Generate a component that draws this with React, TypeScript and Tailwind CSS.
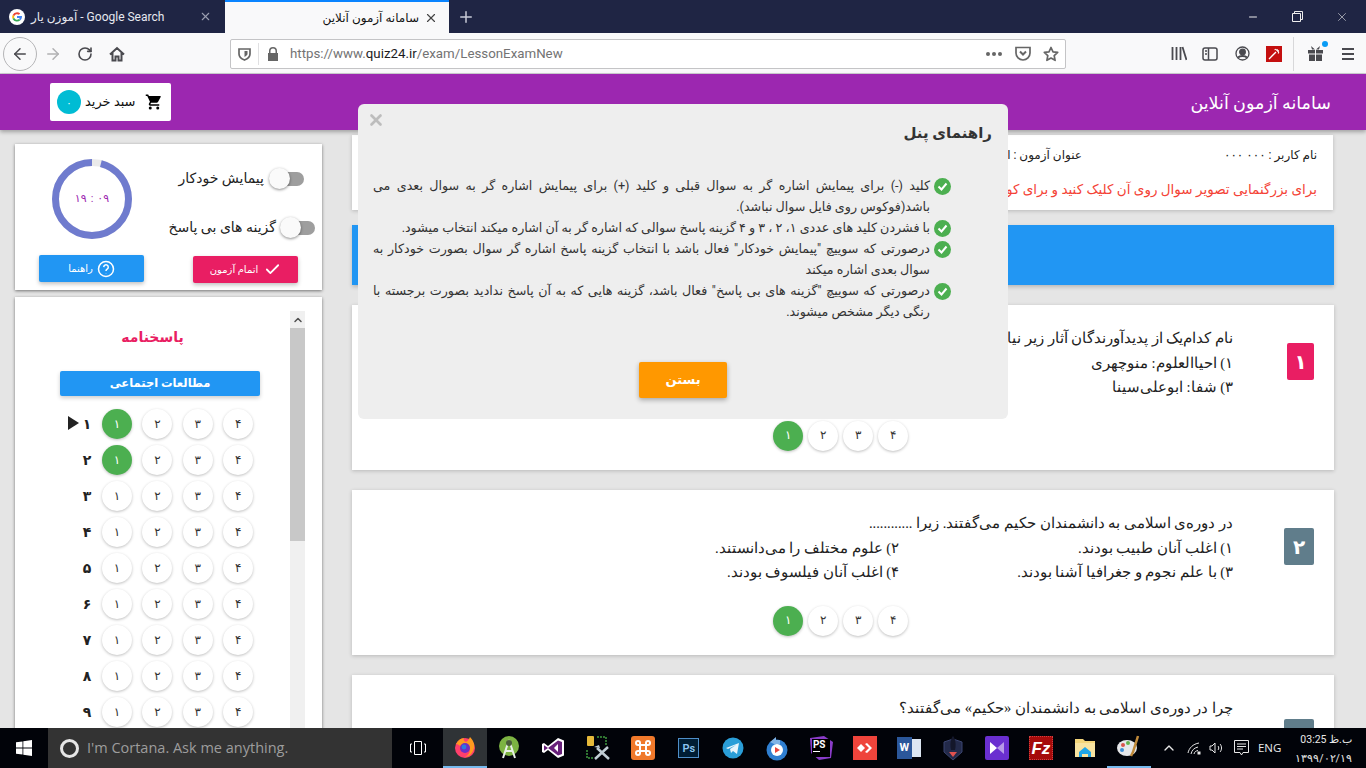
import React from "react";
import { ArrowLeft, ArrowRight, Check, ChevronUp, Minus, Plus, RotateCw, X } from "lucide-react";

const digits = ["۱", "۲", "۳", "۴"];
const rows = ["۱", "۲", "۳", "۴", "۵", "۶", "۷", "۸", "۹"];

const helpItems = [
  "کلید (-) برای پیمایش اشاره گر به سوال قبلی و کلید (+) برای پیمایش اشاره گر به سوال بعدی می باشد(فوکوس روی فایل سوال نباشد).",
  "با فشردن کلید های عددی ۱، ۲ ، ۳ و ۴ گزینه پاسخ سوالی که اشاره گر به آن اشاره میکند انتخاب میشود.",
  "درصورتی که سوییچ \"پیمایش خودکار\" فعال باشد با انتخاب گزینه پاسخ اشاره گر سوال بصورت خودکار به سوال بعدی اشاره میکند",
  "درصورتی که سوییچ \"گزینه های بی پاسخ\" فعال باشد، گزینه هایی که به آن پاسخ ندادید بصورت برجسته با رنگی دیگر مشخص میشوند.",
];

const Toggle = () => (
  <div className="relative h-[14px] w-[34px] rounded-full bg-[#9e9e9e]">
    <div className="absolute left-[-1px] top-[-4px] h-[21px] w-[21px] rounded-full bg-[#fafafa] shadow-[0_1px_3px_rgba(0,0,0,0.45)]" />
  </div>
);

const ChoiceCircle = ({ label, active }: { label: string; active?: boolean }) => (
  <div
    className={`flex h-[30px] w-[30px] items-center justify-center rounded-full text-[12px] shadow-[0_1px_3px_rgba(0,0,0,0.25)] ${
      active ? "bg-[#4caf50] text-white" : "bg-white text-[#333]"
    }`}
  >
    {label}
  </div>
);

const QuestionCard = ({
  num,
  badge,
  badgeWidth,
  badgeTop,
  title,
  options,
}: {
  num: string;
  badge: string;
  badgeWidth: string;
  badgeTop: string;
  title: string;
  options: string[][];
}) => (
  <div className="mt-[20px] flex h-[165px] w-[982px] shrink-0 justify-end bg-white pr-[20px] shadow-[0_1px_4px_rgba(0,0,0,0.2)]">
    <div dir="rtl" className="w-[863px] pt-[21px] font-['Liberation_Serif','DejaVu_Serif',serif] text-[14.5px] leading-[24.5px] text-[#222]">
      <div>{title}</div>
      {options.map((row, i) => (
        <div key={i} className="grid grid-cols-[334px_334px]">
          {row.map((o) => (
            <div key={o}>{o}</div>
          ))}
        </div>
      ))}
      {options.length > 0 && (
        <div className="mr-[325px] mt-[21px] flex justify-end gap-[5px]" dir="ltr">
          {digits.map((d) => (
            <ChoiceCircle key={d} label={d} active={d === "۱"} />
          ))}
        </div>
      )}
    </div>
    <div className={`ml-[51px] flex w-[30px] justify-end ${badgeTop}`}>
      <div className={`flex h-[37px] items-center justify-center rounded-[2px] text-[20px] font-bold text-white ${badgeWidth} ${badge}`}>
        {num}
      </div>
    </div>
  </div>
);

const Firefox = () => (
  <svg width="24" height="24" viewBox="0 0 24 24">
    <circle cx="12" cy="13" r="10" fill="#ff3f6c" />
    <path d="M3 9c2-4 5-6 8-6-1 2 0 3 2 4 2-1 3-3 4-5 3 3 5 7 4 11-1 5-5 9-9 9 5-2 6-8 3-11-2-2-6-2-8 0-1-1-2-2-4-2z" fill="#ff9a1f" />
    <circle cx="12" cy="13" r="5" fill="#6e2fc4" />
    <circle cx="11" cy="12" r="2.4" fill="#2a7ae2" />
  </svg>
);

const taskIcons: React.ReactNode[] = [
  <svg key="android" width="24" height="26" viewBox="0 0 24 26">
    <circle cx="12" cy="11" r="10" fill="#7cb342" />
    <path d="M12 5l-6 18M12 5l6 18M8 16h8" stroke="#e8f0e8" strokeWidth="2" fill="none" />
    <circle cx="12" cy="8" r="3" fill="#4a5d3a" />
  </svg>,
  <svg key="vs" width="24" height="24" viewBox="0 0 24 24">
    <path d="M17 2l6 2.5v15L17 22 7 14l-4 3-2-1V8l2-1 4 3z" fill="#fff" />
    <path d="M17 4.500l4 1.500v12l-4 1.500L7 12l-4 2.800V9.200L7 12z" fill="#68217a" />
    <path d="M17 8l-4 4 4 4z" fill="#fff" />
  </svg>,
  <svg key="tools" width="26" height="26" viewBox="0 0 26 26">
    <rect x="2" y="1" width="7" height="10" rx="1" fill="#e6b93a" />
    <path d="M12 2h9v9M2 15v8h7" stroke="#3f9b3f" strokeWidth="1.5" strokeDasharray="2 1" fill="none" />
    <path d="M10 24l13-12M12 13l12 11" stroke="#c0ccd4" strokeWidth="2.5" />
    <path d="M9 12l5-2 1 3z" fill="#c0ccd4" />
  </svg>,
  <div key="xampp" className="flex h-[24px] w-[24px] items-center justify-center rounded-[3px] bg-[#f0792b]">
    <svg width="18" height="18" viewBox="0 0 18 18" fill="none" stroke="#fff" strokeWidth="2">
      <path d="M6 6H4a2 2 0 1 1 2-2v10a2 2 0 1 1-2-2h10a2 2 0 1 1-2 2V4a2 2 0 1 1 2 2z" />
    </svg>
  </div>,
  <div key="ps" className="flex h-[20px] w-[21px] items-center justify-center border border-[#4f8fc9] bg-[#001d34] text-[11px] font-semibold leading-none text-[#8cc4ef]">
    Ps
  </div>,
  <svg key="telegram" width="22" height="22" viewBox="0 0 22 22">
    <circle cx="11" cy="11" r="10.5" fill="#2a9ed8" />
    <path d="M4 11l13-5-2 11-4-3-2 2-1-4 6-4-8 4z" fill="#e8f4fb" />
  </svg>,
  <svg key="cast" width="24" height="26" viewBox="0 0 24 26">
    <circle cx="12" cy="15" r="10.5" fill="#2f7fd1" />
    <path d="M5 7l6-5v3h4v4H9z" fill="#7fb3e6" />
    <circle cx="12" cy="15" r="6" fill="#fff" />
    <path d="M10 12l5 3-5 3z" fill="#e8473f" />
  </svg>,
  <div key="phpstorm" className="relative h-[22px] w-[22px]">
    <svg className="absolute -left-[2px] -top-[2px]" width="26" height="26" viewBox="0 0 26 26">
      <path d="M2 3l14-2 9 6-2 16-12 2-8-7z" fill="#8a3cc8" />
    </svg>
    <div className="absolute left-[2px] top-[2px] h-[18px] w-[18px] bg-black pl-[1px] text-[10px] font-bold leading-[12px] text-white">
      PS
      <div className="h-[1px] w-[7px] bg-white" />
    </div>
  </div>,
  <div key="anydesk" className="flex h-[24px] w-[24px] items-center justify-center bg-[#ef443b]">
    <svg width="16" height="10" viewBox="0 0 16 10" fill="#fff">
      <path d="M4 1l4 4-4 4-4-4zM10 0l5 5-5 5-2-1 4-4-4-4z" />
    </svg>
  </div>,
  <div key="word" className="relative h-[22px] w-[24px]">
    <div className="absolute right-0 top-[2px] h-[18px] w-[16px] bg-[#dce6f2]" />
    <div className="absolute left-0 top-0 flex h-[22px] w-[15px] items-center justify-center bg-[#2b579a] text-[11px] font-bold text-white">W</div>
  </div>,
  <svg key="rocket" width="22" height="26" viewBox="0 0 22 26">
    <path d="M2 7l9-3 9 3v10l-9 8-9-8z" fill="#232a4a" stroke="#3b4570" />
    <path d="M11 1c3 3 3 10 2 14H9c-1-4-1-11 2-14z" fill="#14172a" />
    <path d="M7 17h8l-4 5z" fill="#e0524f" />
  </svg>,
  <div key="rider" className="flex h-[24px] w-[24px] items-center justify-center rounded-[2px] bg-[#6a2fd0]">
    <svg width="16" height="14" viewBox="0 0 16 14">
      <path d="M1 1l7 6-7 6z" fill="#fff" />
      <path d="M15 1L8 7l7 6z" fill="#b79ae8" />
    </svg>
  </div>,
  <div key="filezilla" className="flex h-[24px] w-[24px] items-center justify-center border border-dotted border-[#d04040] bg-[#a50b0b] font-['Liberation_Sans',sans-serif] text-[17px] font-bold italic leading-none text-white">
    Fz
  </div>,
  <svg key="folder" width="22" height="24" viewBox="0 0 22 24">
    <path d="M1 3h8l2 2h10v16H1z" fill="#f3d57a" />
    <path d="M1 7h20v14H1z" fill="#f8e3a0" />
    <path d="M5 21v-5l6-5 6 5v5h-3v-3H8v3z" fill="#1fa5e8" />
  </svg>,
  <svg key="paint" width="26" height="26" viewBox="0 0 26 26">
    <ellipse cx="11" cy="14" rx="10" ry="8" fill="#e5e7ea" />
    <circle cx="7" cy="11" r="2" fill="#d9534f" />
    <circle cx="12" cy="9" r="2" fill="#62b34f" />
    <circle cx="6" cy="16" r="2" fill="#3f8fd6" />
    <path d="M22 2l-5 16-2 4" stroke="#c08a3a" strokeWidth="2.5" fill="none" />
  </svg>,
];

export default function App() {
  return (
    <div className="relative flex h-[768px] w-[1366px] flex-col overflow-hidden bg-[#e5e5e5] font-['Roboto','DejaVu_Sans',sans-serif] text-[#222]">
      {/* tab strip */}
      <div className="flex h-[33px] shrink-0 items-stretch bg-[#1f2544] text-[12px]">
        <div className="flex w-[225px] items-center pl-[9px] pr-[13px] text-[#e6e8ef]">
          <svg width="16" height="16" viewBox="0 0 16 16" className="shrink-0 rounded-full bg-white">
            <path d="M8 3.200a4.800 4.800 0 0 1 3.200 1.200L9.900 5.800A3 3 0 0 0 5.200 7.200L3.600 6A5 5 0 0 1 8 3.200z" fill="#ea4335" />
            <path d="M3.600 6l1.600 1.200a3 3 0 0 0 0 1.600L3.600 10a5 5 0 0 1 0-4z" fill="#fbbc05" />
            <path d="M3.600 10l1.600-1.200A3 3 0 0 0 10 10l1.400 1.200A5 5 0 0 1 3.600 10z" fill="#34a853" />
            <path d="M13 8v-1H8v2h2.800a2.600 2.600 0 0 1-.8 1l1.400 1.200A5 5 0 0 0 13 8z" fill="#4285f4" />
          </svg>
          <span className="ml-[6px] flex-1 whitespace-nowrap">
            <span dir="rtl">آموزن یار</span> - Google Search
          </span>
          <X size={13} className="text-[#9a9eb0]" />
        </div>
        <div className="flex w-[224px] items-center justify-end border-t-2 border-[#0a84ff] bg-[#f9f9fa] pr-[11px] text-[#111]">
          <span dir="rtl" className="mr-[5px]">سامانه آزمون آنلاین</span>
          <X size={14} className="text-[#444]" />
        </div>
        <div className="flex w-[34px] items-center justify-center text-[#c8cad6]">
          <Plus size={18} />
        </div>
        <div className="flex-1" />
        <div className="flex items-center text-[#eee]">
          <div className="flex w-[44px] justify-center"><Minus size={12} /></div>
          <div className="flex w-[44px] justify-center">
            <svg width="11" height="11" viewBox="0 0 11 11" fill="none" stroke="currentColor">
              <path d="M.5 2.500h8v8h-8zM2.500 2.500v-2h8v8h-2" />
            </svg>
          </div>
          <div className="mr-[1px] flex w-[46px] justify-center"><X size={14} strokeWidth={1} /></div>
        </div>
      </div>

      {/* toolbar */}
      <div className="flex h-[41px] shrink-0 items-center border-b border-[#cfcfd2] bg-[#f9f9fa] pt-[1px] text-[#4a4a4f]">
        <div className="ml-[3px] flex h-[34px] w-[34px] items-center justify-center rounded-full border border-[#b5b5b7]">
          <ArrowLeft size={18} />
        </div>
        <div className="ml-[7px] flex w-[18px] justify-center text-[#b1b1b3]"><ArrowRight size={18} /></div>
        <div className="ml-[15px] flex w-[16px] justify-center"><RotateCw size={16} strokeWidth={2.4} /></div>
        <div className="ml-[16px] flex w-[16px] justify-center">
          <svg width="16" height="16" viewBox="0 0 16 16" fill="none" stroke="currentColor" strokeWidth="2">
            <path d="M1 8.500L8 2l7 6.500M3.500 7v7.500h3v-4h3v4h3V7" />
          </svg>
        </div>
        <div className="ml-[105px] flex h-[30px] w-[836px] items-center rounded-[2px] border border-[#c4c4c6] bg-white text-[#666]">
          <div className="ml-[7px] w-[14px]">
            <svg width="13" height="14" viewBox="0 0 13 14" fill="none" stroke="currentColor" strokeWidth="1.700">
              <path d="M1 2h11v5c0 3-3 5-5.500 6C4 12 1 10 1 7z" />
              <path d="M6.500 4h3v3c0 1-1.500 2-3 3z" fill="currentColor" stroke="none" />
            </svg>
          </div>
          <div className="ml-[6px] h-[22px] w-px bg-[#e0e0e2]" />
          <div className="ml-[8px]">
            <svg width="12" height="14" viewBox="0 0 12 14" fill="currentColor">
              <path d="M1 6h1V4a4 4 0 0 1 8 0v2h1v8H1zm2.500 0h5V4a2.500 2.500 0 0 0-5 0z" />
            </svg>
          </div>
          <div className="ml-[11px] flex-1 text-[13.300px] text-[#737373]">
            https://www.<span className="text-[#1c1c1e]">quiz24.ir</span>/exam/LessonExamNew
          </div>
          <div className="flex gap-[2px]">
            <span className="h-[4px] w-[4px] rounded-full bg-[#666]" />
            <span className="h-[4px] w-[4px] rounded-full bg-[#666]" />
            <span className="h-[4px] w-[4px] rounded-full bg-[#666]" />
          </div>
          <svg className="ml-[13px]" width="16" height="15" viewBox="0 0 16 15" fill="none" stroke="currentColor" strokeWidth="1.700">
            <path d="M1 1.500h14V7a7 7 0 0 1-14 0z" />
            <path d="M5 5.500L8 8.500l3-3" strokeWidth="2" />
          </svg>
          <svg className="ml-[12px] mr-[6px]" width="16" height="16" viewBox="0 0 16 16" fill="none" stroke="currentColor" strokeWidth="1.700">
            <path d="M8 1.500l2 4.300 4.700.6-3.500 3.200.9 4.700L8 12l-4.100 2.300.9-4.700L1.300 6.400 6 5.800z" strokeLinejoin="round" />
          </svg>
        </div>
        <svg className="ml-[105px]" width="16" height="15" viewBox="0 0 16 15" stroke="currentColor" strokeWidth="1.800" fill="none">
          <path d="M1.500 1v13M5.500 1v13M9.500 1v13M11.500 1l4 13" />
        </svg>
        <svg className="ml-[15px]" width="16" height="14" viewBox="0 0 16 14" stroke="currentColor" strokeWidth="1.500" fill="none">
          <rect x="1" y="1" width="14" height="12" rx="2" />
          <path d="M6.500 1v12M3 4h2M3 7h2" />
        </svg>
        <svg className="ml-[17px]" width="15" height="15" viewBox="0 0 15 15" stroke="currentColor" strokeWidth="1.300" fill="none">
          <circle cx="7.500" cy="7.500" r="6.500" />
          <circle cx="7.500" cy="6" r="2.800" fill="currentColor" />
          <path d="M3 11.500c2-2 7-2 9 0" strokeWidth="2" />
        </svg>
        <div className="ml-[16px] flex h-[16px] w-[16px] items-center justify-center bg-[#c40f0f]">
          <svg width="12" height="12" viewBox="0 0 12 12" stroke="#fff" strokeWidth="1.400">
            <path d="M1 11l7-7M9 1v2M11 3H9M7 1l.5 1M11 5l-1-.5" />
          </svg>
        </div>
        <div className="ml-[11px] h-[34px] w-px bg-[#d8d8da]" />
        <div className="relative ml-[14px]">
          <svg width="15" height="15" viewBox="0 0 15 15" fill="currentColor">
            <path d="M0 4h7v3.500H0zM8 4h7v3.500H8zM1 8.500h6V15H1zM8 8.500h6V15H8zM3 0l4 3.500H4zM12 0L8 3.500h3z" />
          </svg>
          <span className="absolute right-[-5px] top-[-5px] h-[6px] w-[6px] rounded-full bg-[#0a9cf5]" />
        </div>
        <div className="ml-[19px] flex w-[12px] flex-col gap-[3px]">
          <span className="h-[2px] bg-[#4a4a4f]" />
          <span className="h-[2px] bg-[#4a4a4f]" />
          <span className="h-[2px] bg-[#4a4a4f]" />
        </div>
      </div>

      {/* site header */}
      <div className="z-10 flex h-[56px] shrink-0 items-center justify-between bg-[#9c27b0] pl-[50px] pr-[35px] shadow-[0_2px_4px_rgba(0,0,0,0.3)]">
        <div className="flex h-[38px] w-[121px] items-center rounded-[2px] bg-white pl-[7px] text-[13px] text-[#111]">
          <div className="flex h-[24px] w-[24px] items-center justify-center rounded-full bg-[#00bcd4] text-[10px] text-white">۰</div>
          <span dir="rtl" className="ml-[4px]">سبد خرید</span>
          <svg className="ml-[9px]" width="18" height="18" viewBox="0 0 24 24" fill="#000">
            <path d="M7 18a2 2 0 1 0 0 4 2 2 0 0 0 0-4zM1 2v2h2l3.600 7.590-1.350 2.450A2 2 0 0 0 7 17h12v-2H7.420a.25.25 0 0 1-.25-.25l.03-.12L8.100 13h7.450c.75 0 1.410-.41 1.750-1.030l3.580-6.490A1 1 0 0 0 20 4H5.210l-.94-2zm16 16a2 2 0 1 0 0 4 2 2 0 0 0 0-4z" />
          </svg>
        </div>
        <div dir="rtl" className="pt-[2px] text-[17.500px] text-white">سامانه آزمون آنلاین</div>
      </div>

      {/* page body */}
      <div className="flex min-h-0 flex-1 items-start pl-[15px]">
        <div className="w-[307px] shrink-0 pt-[14px]">
          <div className="flex h-[146px] flex-col bg-white shadow-[0_1px_3px_rgba(0,0,0,0.5)]">
            <div className="flex">
              <div className="relative ml-[37px] mt-[15px] flex h-[80px] w-[80px] shrink-0 items-center justify-center">
                <svg className="absolute inset-0" width="80" height="80" viewBox="0 0 80 80" fill="none" strokeWidth="7">
                  <circle cx="40" cy="40" r="36.500" stroke="#eaeaea" />
                  <circle cx="40" cy="40" r="36.500" stroke="#6f7bce" strokeDasharray="220 229.300" strokeDashoffset="-9" transform="rotate(-90 40 40)" />
                </svg>
                <div dir="ltr" className="flex gap-[4px] text-[11px] text-[#9c27b0]">
                  <span>۱۹</span>
                  <span>:</span>
                  <span>۰۹</span>
                </div>
              </div>
              <div className="flex flex-1 flex-col items-end pt-[24px]">
                <div className="mr-[18px] flex items-center gap-[6px]">
                  <span dir="rtl" className="text-[14px]">پیمایش خودکار</span>
                  <Toggle />
                </div>
                <div className="mr-[7px] mt-[28px] flex items-center gap-[5px]">
                  <span dir="rtl" className="text-[14px]">گزینه های بی پاسخ</span>
                  <Toggle />
                </div>
              </div>
            </div>
            <div className="mt-[16px] flex items-start justify-between pl-[24px] pr-[24px]">
              <div className="flex h-[27px] w-[105px] items-center justify-center gap-[4px] rounded-[2px] bg-[#2196f3] text-[10px] text-white shadow-[0_2px_4px_rgba(0,0,0,0.25)]">
                <span dir="rtl">راهنما</span>
                <svg width="18" height="18" viewBox="0 0 24 24" fill="none" stroke="#fff" strokeWidth="2">
                  <circle cx="12" cy="12" r="10" />
                  <path d="M9 9.500a3 3 0 1 1 4.500 2.600c-1 .6-1.500 1.200-1.500 2.400M12 17.500v.5" />
                </svg>
              </div>
              <div className="mt-[1px] flex h-[27px] w-[105px] items-center justify-center gap-[6px] rounded-[2px] bg-[#e91e63] text-[10px] text-white shadow-[0_2px_4px_rgba(0,0,0,0.25)]">
                <span dir="rtl">اتمام آزمون</span>
                <Check size={17} strokeWidth={2.5} />
              </div>
            </div>
          </div>

          <div className="relative mt-[7px] h-[500px] bg-white pr-[17px] shadow-[0_1px_3px_rgba(0,0,0,0.5)]">
            <div className="absolute right-[17px] top-[14px] flex h-[500px] w-[15px] flex-col bg-[#f0f0f0]">
              <div className="flex h-[17px] items-center justify-center text-[#505050]">
                <ChevronUp size={12} strokeWidth={3} />
              </div>
              <div className="h-[213px] bg-[#c8c8c8]" />
            </div>
            <div dir="rtl" className="w-[275px] pt-[30px] text-center text-[14px] font-bold leading-[20px] text-[#e91e63]">
              پاسخنامه
            </div>
            <div className="ml-[45px] mt-[24px] flex h-[25px] w-[200px] items-center justify-center rounded-[2px] bg-[#2196f3] text-[11.500px] font-bold text-white shadow-[0_2px_4px_rgba(0,0,0,0.2)]">
              <span dir="rtl">مطالعات اجتماعی</span>
            </div>
            <div className="mt-[13px] flex flex-col gap-[6px]">
              {rows.map((r, i) => (
                <div key={r} className="flex items-center">
                  <div className="flex w-[64px] justify-end">
                    {i === 0 && (
                      <svg className="mb-[3px]" width="12" height="14" viewBox="0 0 12 14" fill="#222">
                        <path d="M1 0l11 7-11 7z" />
                      </svg>
                    )}
                  </div>
                  <div className="mr-[7px] w-[16px] text-center text-[14px] font-bold text-[#222]">{r}</div>
                  <div className="flex gap-[10.400px]">
                    {digits.map((d, j) => (
                      <ChoiceCircle key={d} label={d} active={j === 0 && i < 2} />
                    ))}
                  </div>
                </div>
              ))}
            </div>
          </div>
        </div>

        <div className="ml-[30px] flex w-[982px] shrink-0 flex-col pt-[5px]">
          <div className="h-[75px] w-[981px] bg-white pr-[16px] shadow-[0_1px_4px_rgba(0,0,0,0.2)]" dir="rtl">
            <div className="flex pt-[11px] text-[12px] leading-[18px]">
              <div className="w-[235px]">نام کاربر : ۰۰۰ ۰۰۰</div>
              <div>عنوان آزمون : ا</div>
            </div>
            <div className="mt-[14px] whitespace-nowrap text-[13.500px] leading-[22px] text-[#f44336]">
              برای بزرگنمایی تصویر سوال روی آن کلیک کنید و برای کوچک نمایی
            </div>
          </div>
          <div className="mt-[15px] h-[60px] w-[982px] bg-[#2196f3] shadow-[0_2px_4px_rgba(0,0,0,0.2)]" />
          <QuestionCard
            num="۱"
            badge="bg-[#e91e63]"
            badgeWidth="w-[27px]"
            badgeTop="pt-[38px]"
            title="نام کدام‌یک از پدیدآورندگان آثار زیر نیامده است؟"
            options={[["۱) احیاالعلوم: منوچهری"], ["۳) شفا: ابوعلی‌سینا"]]}
          />
          <QuestionCard
            num="۲"
            badge="bg-[#607d8b]"
            badgeWidth="w-[30px]"
            badgeTop="pt-[38px]"
            title="در دوره‌ی اسلامی به دانشمندان حکیم می‌گفتند. زیرا ............"
            options={[
              ["۱) اغلب آنان طبیب بودند.", "۲) علوم مختلف را می‌دانستند."],
              ["۳) با علم نجوم و جغرافیا آشنا بودند.", "۴) اغلب آنان فیلسوف بودند."],
            ]}
          />
          <QuestionCard
            num="۳"
            badge="bg-[#607d8b]"
            badgeWidth="w-[30px]"
            badgeTop="pt-[44px]"
            title="چرا در دوره‌ی اسلامی به دانشمندان «حکیم» می‌گفتند؟"
            options={[]}
          />
        </div>
      </div>

      {/* help modal */}
      <div className="absolute left-[358px] top-[104px] z-20 h-[315px] w-[650px] rounded-[6px] bg-[#eeeeee]">
        <div className="absolute left-[9px] top-[7px] text-[#bdbdbd]">
          <X size={18} strokeWidth={3.5} />
        </div>
        <div dir="rtl" className="pr-[16px] pt-[17px] text-[15px] font-semibold leading-[24px] text-[#333]">
          راهنمای پنل
        </div>
        <ul dir="rtl" className="mt-[30px] pl-[15px] pr-[78px] text-[12.700px] leading-[21px] text-[#333]">
          {helpItems.map((item) => (
            <li key={item} className="relative text-justify">
              <svg className="absolute right-[-21px] top-[3px]" width="17" height="17" viewBox="0 0 17 17">
                <circle cx="8.500" cy="8.500" r="8.500" fill="#4caf50" />
                <path d="M4.500 8.500l3 3 5-6" fill="none" stroke="#fff" strokeWidth="2" />
              </svg>
              {item}
            </li>
          ))}
        </ul>
        <div className="absolute left-[281px] top-[258px] flex h-[36px] w-[88px] items-center justify-center rounded-[2px] bg-[#ff9800] text-[13px] font-bold text-white shadow-[0_2px_5px_rgba(0,0,0,0.3)]">
          <span dir="rtl">بستن</span>
        </div>
      </div>

      {/* windows taskbar */}
      <div className="absolute bottom-0 left-0 z-30 flex h-[40px] w-[1366px] items-stretch bg-[#010309] text-white">
        <div className="flex w-[48px] items-center justify-center">
          <svg width="16" height="16" viewBox="0 0 16 16" fill="#fff">
            <path d="M0 2.300l6.500-.9v6.200H0zM7.300 1.300L16 0v7.600H7.300zM0 8.400h6.500v6.200L0 13.700zM7.300 8.400H16V16l-8.700-1.300z" />
          </svg>
        </div>
        <div className="flex w-[344px] items-center bg-[#333333] pl-[12px] font-['Open_Sans',sans-serif] text-[14.500px] text-[#9d9d9d]">
          <div className="h-[19px] w-[19px] rounded-full border-[3px] border-[#e6e6e6]" />
          <span className="ml-[8px]">I'm Cortana. Ask me anything.</span>
        </div>
        <div className="flex w-[51px] items-center justify-center">
          <svg width="16" height="14" viewBox="0 0 16 14" fill="none" stroke="#fff">
            <path d="M4.500.5h7v13h-7zM2 3H.5v8H2M14 3h1.500v8H14" />
          </svg>
        </div>
        <div className="flex w-[44px] items-center justify-center border-b-[2px] border-[#76b9ed] bg-[#2f3336]">
          <Firefox />
        </div>
        {taskIcons.map((icon, i) => (
          <div
            key={i}
            className={`flex items-center justify-center ${i === 3 ? "w-[47px]" : i < 3 ? "w-[44.300px]" : "w-[44px]"} ${
              i === taskIcons.length - 1 ? "border-b-[2px] border-[#76b9ed]" : ""
            }`}
          >
            {icon}
          </div>
        ))}
        <div className="ml-[10px] flex items-center text-[#e8e8e8]">
          <ChevronUp size={16} />
          <svg className="ml-[10px]" width="16" height="14" viewBox="0 0 16 14" fill="none" stroke="currentColor">
            <path d="M1 12c1-5 5-9 11-10M4 13c1-4 3-6 7-7M7 13c.5-2 1.500-3 4-3.500" />
            <rect x="11" y="11" width="2" height="2" fill="currentColor" />
          </svg>
          <svg className="ml-[6px]" width="15" height="14" viewBox="0 0 15 14" fill="none" stroke="currentColor">
            <path d="M1 5h2l3-3v10L3 9H1zM9 5c1 1 1 3 0 4M11 3c2 2 2 6 0 8" />
          </svg>
          <svg className="ml-[10px]" width="15" height="16" viewBox="0 0 15 16" fill="none" stroke="currentColor">
            <path d="M.5.5h14v12H9L7.500 15 6 12.500H.5zM3 4h9M3 6.500h9M3 9h6" />
          </svg>
          <span className="ml-[9px] w-[26px] font-['Open_Sans',sans-serif] text-[11.500px]">ENG</span>
          <div className="ml-[12px] flex w-[56px] flex-col items-end gap-[5px] pt-[2px] font-['Roboto',sans-serif] text-[10.500px] leading-[14px]">
            <span dir="rtl">ب.ظ 03:25</span>
            <span dir="ltr">۱۳۹۹/۰۲/۱۹</span>
          </div>
        </div>
      </div>
    </div>
  );
}
